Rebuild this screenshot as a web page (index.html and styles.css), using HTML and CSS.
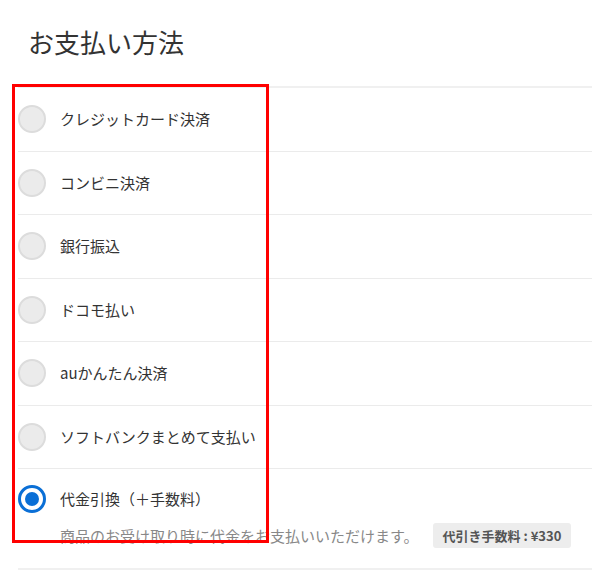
FILE: index.html
```html
<!DOCTYPE html>
<html lang="ja">
<head>
  <meta charset="UTF-8">
  <title>お支払い方法</title>
  <link rel="stylesheet" href="styles.css">
</head>
<body>

<div class="payment">
  <h1 class="payment-title">お支払い方法</h1>

  <ul class="method-list">
    <li class="method">
      <span class="radio"></span>
      <span class="method-name">クレジットカード決済</span>
    </li>
    <li class="method">
      <span class="radio"></span>
      <span class="method-name">コンビニ決済</span>
    </li>
    <li class="method">
      <span class="radio"></span>
      <span class="method-name">銀行振込</span>
    </li>
    <li class="method">
      <span class="radio"></span>
      <span class="method-name">ドコモ払い</span>
    </li>
    <li class="method">
      <span class="radio"></span>
      <span class="method-name">auかんたん決済</span>
    </li>
    <li class="method">
      <span class="radio"></span>
      <span class="method-name">ソフトバンクまとめて支払い</span>
    </li>
    <li class="method method-open">
      <div class="method-head">
        <span class="radio checked"></span>
        <span class="method-name">代金引換（＋手数料）</span>
      </div>
      <div class="method-note">
        <span>商品のお受け取り時に代金をお支払いいただけます。</span>
        <span class="fee">代引き手数料 : ¥330</span>
      </div>
    </li>
  </ul>

  <!-- 赤枠（注釈） -->
  <div class="highlight"></div>
</div>

</body>
</html>
```

FILE: styles.css
```css
body {
  margin: 0;
  font-family: "Noto Sans CJK JP", "Liberation Sans", sans-serif;
  color: #333;
  background: #fff;
}

.payment {
  position: relative;
  padding: 22px 0 0 18px;
}

.payment-title {
  margin: 0 0 25px 10px;
  font-size: 26px;
  font-weight: normal;
  line-height: 39px;
  color: #333;
}

.method-list {
  list-style: none;
  margin: 0;
  padding: 0;
  border-top: 2px solid #f0f0f0;
  border-bottom: 2px solid #f0f0f0;
}

.method {
  display: flex;
  align-items: center;
  gap: 14px;
  height: 63.5px;
  box-sizing: border-box;
  border-bottom: 1px solid #ebebeb;
  font-size: 15px;
}

.method:last-child {
  border-bottom: none;
}

.radio {
  width: 28px;
  height: 28px;
  box-sizing: border-box;
  border-radius: 50%;
  border: 2px solid #dcdcdc;
  background: #ebebeb;
  flex-shrink: 0;
}

.radio.checked {
  border: 3px solid #0a6fd6;
  background: #fff;
  display: flex;
  align-items: center;
  justify-content: center;
}

.radio.checked::after {
  content: "";
  width: 14px;
  height: 14px;
  border-radius: 50%;
  background: #0a6fd6;
}

.method-name {
  line-height: 20px;
}

.method-open {
  display: block;
  height: auto;
  padding: 16px 0 20px;
}

.method-head {
  display: flex;
  align-items: center;
  gap: 14px;
}

.method-note {
  display: flex;
  align-items: center;
  gap: 14px;
  margin: 10px 0 0 42px;
  font-size: 15px;
  color: #888;
}

.fee {
  padding: 3px 10px;
  background: #ededed;
  border-radius: 3px;
  font-size: 13px;
  font-weight: bold;
  color: #555;
  line-height: 19px;
}

.highlight {
  position: absolute;
  left: 12px;
  top: 84px;
  width: 257px;
  height: 459px;
  box-sizing: border-box;
  border: 3px solid #ff0000;
  pointer-events: none;
}
```
